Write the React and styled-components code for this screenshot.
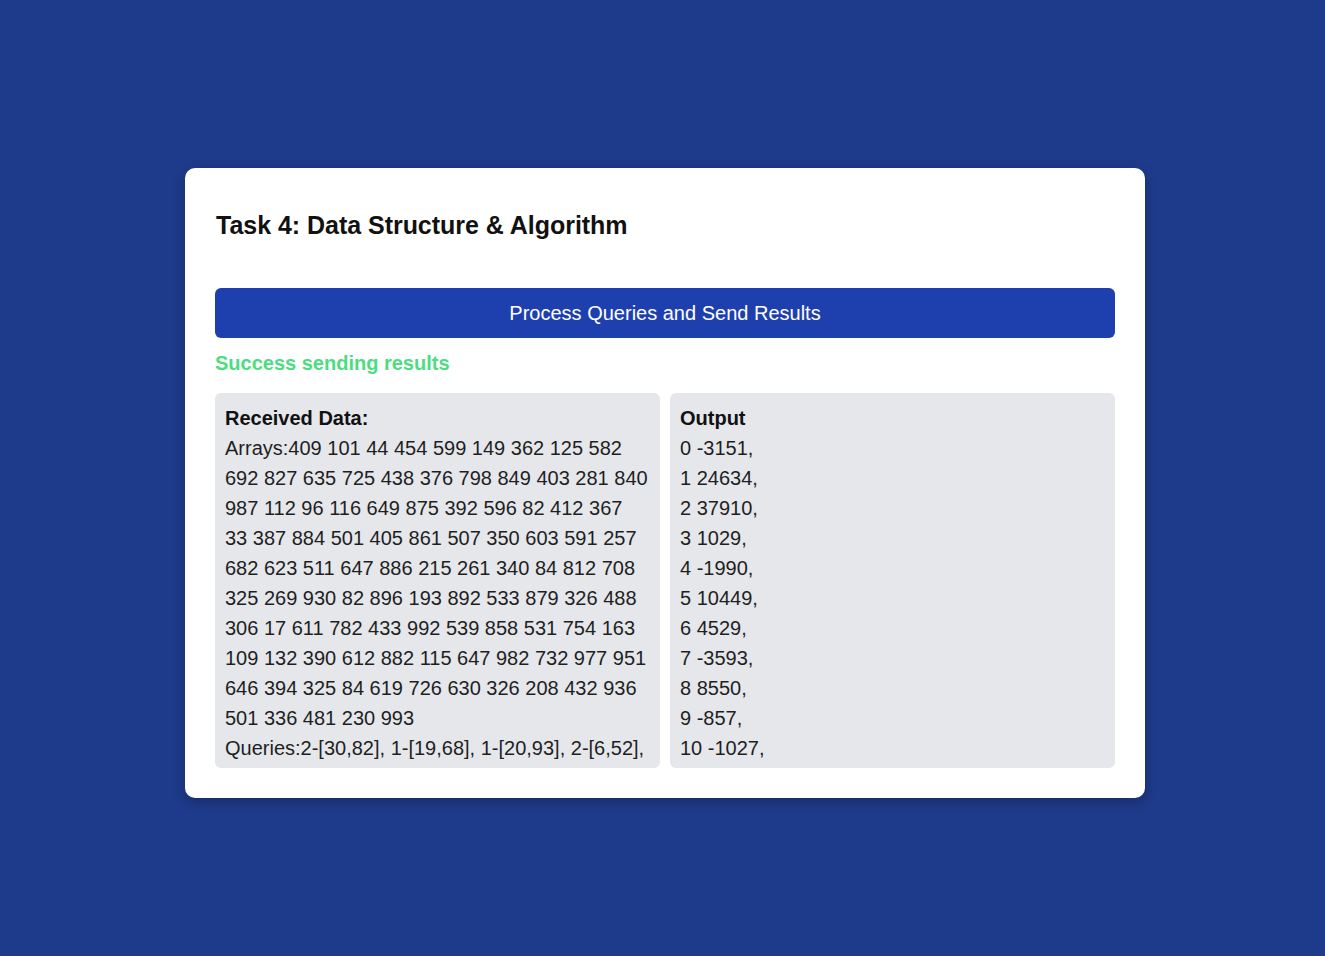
import React from "react";
import styled, { createGlobalStyle } from "styled-components";

const Global = createGlobalStyle`
  html, body { margin: 0; padding: 0; }
  body {
    background: #1e3a8a;
    font-family: "Liberation Sans", Arial, sans-serif;
    min-height: 956px;
  }
`;

const Page = styled.div`
  min-height: 956px;
  box-sizing: border-box;
  padding: 168px 0 0 185px;
`;

const Card = styled.div`
  width: 960px;
  box-sizing: border-box;
  background: #ffffff;
  border-radius: 10px;
  padding: 30px;
  box-shadow: 0 4px 12px rgba(0, 0, 0, 0.25);
  display: flex;
  flex-direction: column;
`;

const Title = styled.h2`
  margin: 13px 0 48px 1px;
  font-family: "Liberation Sans", Arial, sans-serif;
  font-size: 25px;
  line-height: 29px;
  font-weight: 700;
  letter-spacing: -0.03px;
  color: #111111;
`;

const Button = styled.button`
  height: 50px;
  width: 100%;
  border: none;
  border-radius: 6px;
  background: #1e40af;
  color: #ffffff;
  font-family: "Liberation Sans", Arial, sans-serif;
  font-size: 20px;
  cursor: pointer;
`;

const Status = styled.div`
  margin: 10px 0 15px 0;
  font-size: 20px;
  line-height: 30px;
  font-weight: 700;
  color: #4ade80;
`;

const Panels = styled.div`
  display: grid;
  grid-template-columns: 1fr 1fr;
  gap: 10px;
`;

const Panel = styled.div`
  height: 375px;
  box-sizing: border-box;
  background: #e5e7eb;
  border-radius: 6px;
  padding: 10px;
  overflow: hidden;
  font-size: 20px;
  line-height: 30px;
  color: #1f1f1f;
`;

const Heading = styled.div`
  font-weight: 700;
  color: #111111;
`;

const Line = styled.div`
  word-wrap: break-word;
`;

const arrays =
  "Arrays:409 101 44 454 599 149 362 125 582 692 827 635 725 438 376 798 849 403 281 840 987 112 96 116 649 875 392 596 82 412 367 33 387 884 501 405 861 507 350 603 591 257 682 623 511 647 886 215 261 340 84 812 708 325 269 930 82 896 193 892 533 879 326 488 306 17 611 782 433 992 539 858 531 754 163 109 132 390 612 882 115 647 982 732 977 951 646 394 325 84 619 726 630 326 208 432 936 501 336 481 230 993";

const queries = "Queries:2-[30,82], 1-[19,68], 1-[20,93], 2-[6,52],";

const outputs = [
  "0 -3151,",
  "1 24634,",
  "2 37910,",
  "3 1029,",
  "4 -1990,",
  "5 10449,",
  "6 4529,",
  "7 -3593,",
  "8 8550,",
  "9 -857,",
  "10 -1027,",
];

export default function App() {
  return (
    <>
      <Global />
      <Page>
        <Card>
          <Title>Task 4: Data Structure &amp; Algorithm</Title>
          <Button>Process Queries and Send Results</Button>
          <Status>Success sending results</Status>
          <Panels>
            <Panel>
              <Heading>Received Data:</Heading>
              <Line>{arrays}</Line>
              <Line>{queries}</Line>
            </Panel>
            <Panel>
              <Heading>Output</Heading>
              {outputs.map((o) => (
                <Line key={o}>{o}</Line>
              ))}
            </Panel>
          </Panels>
        </Card>
      </Page>
    </>
  );
}
